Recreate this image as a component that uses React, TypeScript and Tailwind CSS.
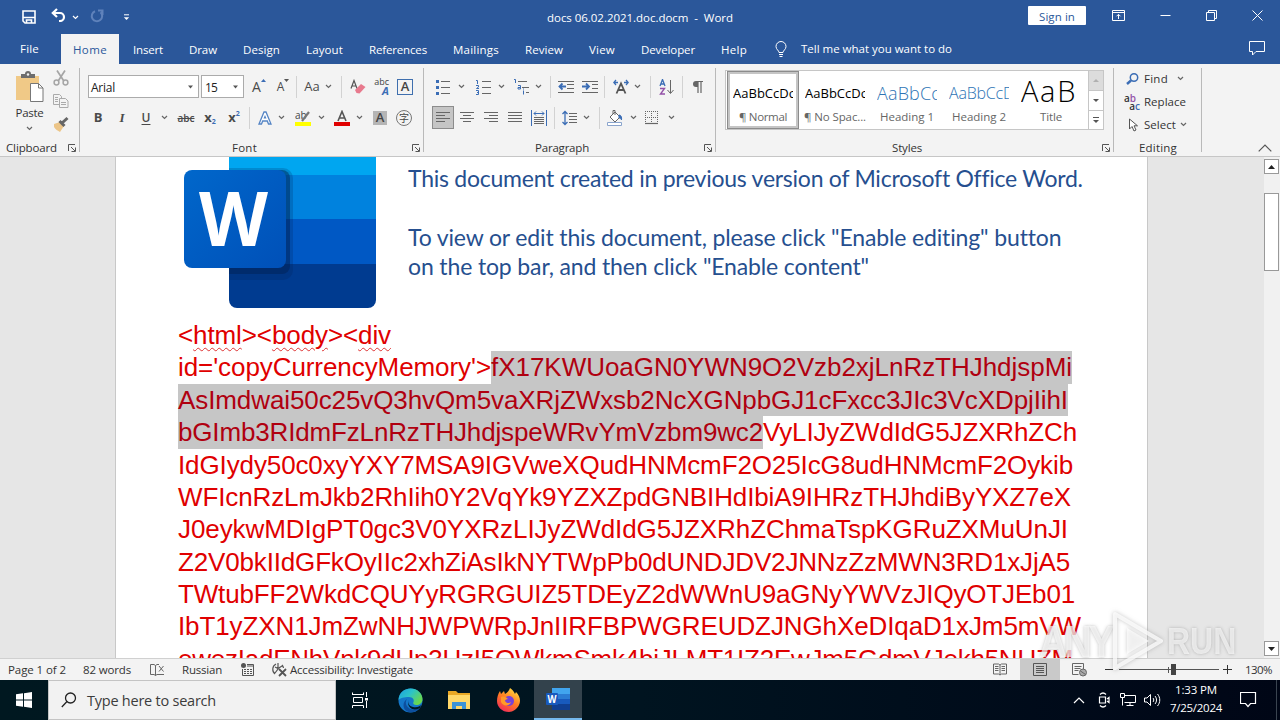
import React, { useLayoutEffect, useRef, useState } from 'react';

type FitProps = { w: number; className?: string; children: React.ReactNode };

// Spaces the letters out so that the text takes exactly `w` pixels.
const Fit: React.FC<FitProps> = ({ w, className = '', children }) => {
  const ref = useRef<HTMLSpanElement>(null);
  const [spacing, setSpacing] = useState(0);

  useLayoutEffect(() => {
    const el = ref.current;
    if (!el) return;
    el.style.letterSpacing = '0px';
    const natural = el.getBoundingClientRect().width;
    const next = (w - natural) / (el.textContent || ' ').length;
    el.style.letterSpacing = `${next}px`;
    setSpacing(next);
  }, [w]);

  return (
    <span
      ref={ref}
      className={`inline-block shrink-0 whitespace-pre ${className}`}
      style={{ letterSpacing: `${spacing}px` }}
    >
      {children}
    </span>
  );
};

type IconProps = { w?: number; h?: number; className?: string; children: React.ReactNode };

const Icon: React.FC<IconProps> = ({ w = 16, h = 16, className = '', children }) => (
  <svg
    width={w}
    height={h}
    viewBox={`0 0 ${w} ${h}`}
    fill="none"
    stroke="currentColor"
    className={`shrink-0 ${className}`}
  >
    {children}
  </svg>
);

const Chevron = ({ className = '' }: { className?: string }) => (
  <Icon w={7} h={5} className={className}>
    <path d="M1 1l2.5 2.5L6 1" strokeWidth="1.2" />
  </Icon>
);

const Sep = ({ className = '' }: { className?: string }) => (
  <div className={`w-px h-[22px] shrink-0 bg-[#d2d2d2] ${className}`} />
);

const Divider = () => <div className="w-px h-[84px] mt-1 shrink-0 bg-[#b9b9b9]" />;

const Launcher = ({ className = '' }: { className?: string }) => (
  <Icon w={8} h={8} className={`text-[#555] ${className}`}>
    <path d="M.5 7V.5H7M3 3l4 4M7.5 3.5v4h-4" />
  </Icon>
);

const Glyph = ({ className = '', children }: { className?: string; children: React.ReactNode }) => (
  <div
    className={`w-4 h-5 shrink-0 flex items-center justify-center leading-none text-[#4a4a4a] ${className}`}
  >
    {children}
  </div>
);

const tabs = [
  { name: 'Insert', w: 30 },
  { name: 'Draw', w: 28 },
  { name: 'Design', w: 37 },
  { name: 'Layout', w: 37 },
  { name: 'References', w: 58 },
  { name: 'Mailings', w: 46 },
  { name: 'Review', w: 38 },
  { name: 'View', w: 26 },
  { name: 'Developer', w: 54 },
  { name: 'Help', w: 26 },
];

const TitleBar = () => (
  <div className="h-[34px] flex items-center text-white">
    <Icon w={14} h={14} className="ml-[22px]">
      <path d="M1 1h12v12H3l-2-2z" strokeWidth="1.6" />
      <path d="M1 7.5h12M4.5 13v-3h5v3" strokeWidth="1.6" />
    </Icon>
    <Icon w={15} h={14} className="ml-[15px] -mt-1">
      <path d="M1.5 5h7.5a4 4 0 010 8H8M6 1L1.8 5 6 9" strokeWidth="2.200" />
    </Icon>
    <Chevron className="ml-[6px]" />
    <Icon w={14} h={14} className="ml-[11px] -mt-0.5 text-[#5f82bb]">
      <path d="M5 2.2A5.2 5.2 0 1010.500 3.200M8 1.500h4.500v4.500" strokeWidth="2" />
    </Icon>
    <Icon w={7} h={7} className="ml-[19px]">
      <path d="M1 .8h5" />
      <path d="M.8 3.2h5.4L3.5 6z" fill="currentColor" stroke="none" />
    </Icon>
    <Fit w={186} className="ml-[417px] mt-0.5 text-[11.5px]">
      docs 06.02.2021.doc.docm{'  -  '}Word
    </Fit>
    <button
      type="button"
      className="ml-[295px] -mt-[3px] w-[58px] h-[19px] shrink-0 bg-white text-[#2b579a] rounded-[1px] flex items-center justify-center text-[11.5px]"
    >
      <Fit w={36} className="mt-0.5">
        Sign in
      </Fit>
    </button>
    <Icon w={13} h={11} className="ml-[26px] -mt-1">
      <path d="M.5.5h12v10H.5zM.5 2.5h12M6.5 9V4.5M4.5 6.3l2-2 2 2" />
    </Icon>
    <Icon w={11} h={11} className="ml-[35px] -mt-1">
      <path d="M.5 5.5h10" />
    </Icon>
    <Icon w={11} h={11} className="ml-[35px] -mt-1">
      <path d="M.5 2.5h8v8h-8zM2.5 2.5v-2h8v8h-2" />
    </Icon>
    <Icon w={11} h={11} className="ml-[35px] -mt-1">
      <path d="M.5.5l10 10M10.5.5l-10 10" />
    </Icon>
  </div>
);

const TabRow = () => (
  <div className="h-[30px] flex items-center text-white text-[11.5px]">
    <Fit w={19} className="ml-5">
      File
    </Fit>
    <div className="ml-[22px] w-[58px] h-full pt-0.5 shrink-0 bg-[#f3f3f3] text-[#2b579a] flex items-center justify-center">
      <Fit w={34}>Home</Fit>
    </div>
    <div className="ml-[14px] mt-0.5 flex">
      {tabs.map((tab) => (
        <Fit key={tab.name} w={tab.w} className="mr-[26px]">
          {tab.name}
        </Fit>
      ))}
    </div>
    <Icon w={12} h={16} className="ml-[2px]">
      <path d="M4 11.5C4 9.5 1 8.500 1 5.500a5 5 0 0110 0c0 3-3 4-3 6zM4 13.500h4M4.500 15.500h3" />
    </Icon>
    <Fit w={151} className="ml-[14px]">
      Tell me what you want to do
    </Fit>
    <Icon w={17} h={15} className="ml-auto mr-[14px] -mt-0.5">
      <path d="M.5.5h15v10H7l-3.500 3.500v-3.500h-3z" />
    </Icon>
  </div>
);

const GroupLabel = ({ children }: { children: React.ReactNode }) => (
  <div className="h-4 mt-auto flex items-center text-[11.5px] text-[#333]">{children}</div>
);

const ClipboardGroup = () => (
  <div className="w-[79px] shrink-0 flex flex-col pt-[7px]">
    <div className="h-[62px] flex">
      <div className="ml-[15px] w-[29px] flex flex-col items-center">
        <Icon w={29} h={32} className="text-[#777]">
          <path d="M1 5h23v24H1z" fill="#f0c987" stroke="none" />
          <path d="M6 3h4a3 3 0 016 0h4v4H6z" fill="#6d6d6d" stroke="none" />
          <circle cx="13" cy="3.500" r="1.200" fill="#f3f3f3" stroke="none" />
          <path d="M15.500 12.500h8l4.500 4.500v13.500H15.500z" fill="#fff" />
          <path d="M23.500 12.500V17H28" />
        </Icon>
        <Fit w={28} className="mt-[2px] text-[11.5px] leading-4 text-[#333]">
          Paste
        </Fit>
        <Chevron className="mt-[5px] text-[#666]" />
      </div>
      <div className="ml-[9px] -mt-px flex flex-col gap-[7px]">
        <Icon className="text-[#a5a5a5]">
          <path d="M4 .5l6.500 10M12 .5L5.500 10.500" strokeWidth="1.700" />
          <circle cx="3.500" cy="12.500" r="2.400" strokeWidth="1.500" />
          <circle cx="12.500" cy="12.500" r="2.400" strokeWidth="1.500" />
        </Icon>
        <Icon className="text-[#aaa]">
          <path d="M.5 1.500h6l2 2v8h-8z" />
          <path d="M6.500 5.500h6l2.500 2.500v6.500H6.500z" fill="#f3f3f3" />
          <path d="M8 9.500h5M8 11.500h5M2 4.500h3M2 6.500h3M2 8.500h3" />
        </Icon>
        <Icon>
          <path d="M1 8l6-2 4 4-4 6c-2-1-5-3-6-5z" fill="#ecc588" stroke="none" />
          <path d="M6.500 5l5 5M9 7l5.500-5" stroke="#666" strokeWidth="3" />
        </Icon>
      </div>
    </div>
    <GroupLabel>
      <Fit w={51} className="ml-[6px]">
        Clipboard
      </Fit>
      <Launcher className="ml-[11px]" />
    </GroupLabel>
  </div>
);

const FontGroup = () => (
  <div className="w-[343px] shrink-0 flex flex-col pt-[7px] text-[#666]">
    <div className="h-[31px] flex items-center">
      <div className="ml-2 w-[111px] h-[23px] shrink-0 bg-white border border-[#ababab] flex items-center text-xs text-[#222]">
        <Fit w={24} className="ml-[2px] mt-0.5">
          Arial
        </Fit>
        <Icon w={7} h={4} className="ml-auto mr-1 text-[#555]">
          <path d="M1 .5h5L3.500 3.500z" fill="currentColor" stroke="none" />
        </Icon>
      </div>
      <div className="ml-[2px] w-[43px] h-[23px] shrink-0 bg-white border border-[#ababab] flex items-center text-xs text-[#222]">
        <Fit w={12} className="ml-[3px] mt-0.5">
          15
        </Fit>
        <Icon w={7} h={4} className="ml-auto mr-1 text-[#555]">
          <path d="M1 .5h5L3.500 3.500z" fill="currentColor" stroke="none" />
        </Icon>
      </div>
      <Glyph className="ml-[7px] text-sm">
        A
        <Icon w={5} h={3} className="mb-3 text-[#3b6db5]">
          <path d="M0 3h5L2.500 0z" fill="currentColor" stroke="none" />
        </Icon>
      </Glyph>
      <Glyph className="ml-2 text-xs">
        A
        <Icon w={5} h={3} className="mb-3 text-[#555]">
          <path d="M0 0h5L2.500 3z" fill="currentColor" stroke="none" />
        </Icon>
      </Glyph>
      <Sep className="ml-[5px]" />
      <Glyph className="ml-[7px] text-[13px]">Aa</Glyph>
      <Chevron className="ml-[5px]" />
      <Sep className="ml-[9px]" />
      <Icon className="ml-2">
        <path d="M1 9.500L4 1.500l3 8M2 7h4" stroke="#555" strokeWidth="1.200" />
        <path d="M5 11l6-6 4.500 3-6 6.500-3-.5z" fill="#e8798d" stroke="none" />
      </Icon>
      <div className="ml-[7px] w-4 shrink-0 flex flex-col items-end leading-none text-[#444]">
        <span className="text-[9px] leading-[8px]">abc</span>
        <span className="text-[11px] leading-[9px] font-bold italic text-[#3b6db5]">A</span>
      </div>
      <div className="ml-2 w-4 h-4 shrink-0 border border-[#3f6fae] flex items-center justify-center text-[13px] font-semibold leading-none text-[#444]">
        A
      </div>
    </div>
    <div className="h-[31px] flex items-center">
      <Glyph className="ml-[10px] text-[13px] font-bold">B</Glyph>
      <Glyph className="ml-2 text-[13px] font-bold italic font-['Liberation_Serif',serif]">I</Glyph>
      <Glyph className="ml-2 text-xs font-semibold underline underline-offset-2">U</Glyph>
      <Chevron className="ml-[7px]" />
      <Glyph className="ml-[10px] text-[10px] font-semibold line-through">abc</Glyph>
      <Glyph className="ml-2 text-[13px] font-bold">
        x<span className="text-[7px] mt-2 text-[#3b6db5]">2</span>
      </Glyph>
      <Glyph className="ml-2 text-[13px] font-bold">
        x<span className="text-[7px] mb-2 text-[#3b6db5]">2</span>
      </Glyph>
      <Sep className="ml-[7px]" />
      <Icon className="ml-[7px]">
        <path d="M2 14L7 2h2l5 12h-2.500l-1.200-3H5.700l-1.200 3z" fill="#fff" stroke="#5585c5" strokeWidth="1.300" />
        <path d="M6.500 8.500L8 5l1.500 3.500z" fill="#5585c5" stroke="none" />
      </Icon>
      <Chevron className="ml-[5px]" />
      <Icon className="ml-[10px]">
        <path d="M0 12h16v4H0z" fill="#ff0" stroke="none" />
        <text x="0" y="9" fontSize="10" fill="#444" stroke="none">
          ab
        </text>
        <path d="M7 11l7-9" stroke="#777" strokeWidth="2.200" />
      </Icon>
      <Chevron className="ml-[7px]" />
      <Icon className="ml-[9px]">
        <path d="M0 12h16v4H0z" fill="#e00000" stroke="none" />
        <path d="M4 11L8 1.500 12 11M5.500 8h5" stroke="#555" strokeWidth="1.600" />
      </Icon>
      <Chevron className="ml-[6px]" />
      <div className="ml-[10px] w-[14px] h-[14px] shrink-0 bg-[#b5b5b5] flex items-center justify-center text-[13px] font-semibold leading-none text-[#444]">
        A
      </div>
      <div className="ml-[9px] w-4 h-4 shrink-0 rounded-full border border-[#777] flex items-center justify-center text-[10px] leading-none text-[#444] font-['Noto_Sans_CJK_SC',sans-serif]">
        字
      </div>
    </div>
    <GroupLabel>
      <Fit w={25} className="ml-[152px]">
        Font
      </Fit>
      <Launcher className="ml-auto mr-[3px]" />
    </GroupLabel>
  </div>
);

const ParagraphGroup = () => (
  <div className="w-[291px] pl-px shrink-0 flex flex-col pt-[7px] text-[#666]">
    <div className="h-[31px] flex items-center">
      <Icon className="ml-[11px]">
        <path d="M5 2.500h9M5 8.500h9M5 14.500h9" />
        <path d="M0 1h3v3H0zM0 7h3v3H0zM0 13h3v3H0z" fill="#3b6db5" stroke="none" />
      </Icon>
      <Chevron className="ml-[6px]" />
      <Icon className="ml-[11px]">
        <path d="M6 2.500h9M6 8.500h9M6 14.500h9" />
        <path d="M0 1.500h1.500V5M0 6.500h2.500v1.500L.5 9.500H3M0 11.500h2.500v4H0M1 13.500h1.500" stroke="#3b6db5" />
      </Icon>
      <Chevron className="ml-[6px]" />
      <Icon className="ml-[9px]">
        <path d="M4 2.500h9M8 8.500h7M12 13.500h3" />
        <path d="M0 .5h1.500V4M4 6.500h2.500V10H4V8.500h2M9.500 11.500v4M9.500 9.500v1" stroke="#3b6db5" />
      </Icon>
      <Chevron className="ml-[5px]" />
      <Sep className="ml-[8px]" />
      <Icon className="ml-[7px]">
        <path d="M0 2.500h16M9 5.500h7M9 9.500h7M0 13.500h16" />
        <path d="M8 7.500H2M4.500 4.500L1.500 7.500l3 3" stroke="#3b6db5" strokeWidth="1.800" />
      </Icon>
      <Icon className="ml-2">
        <path d="M0 2.500h16M10 5.500h6M10 9.500h6M0 13.500h16" />
        <path d="M0 7.500h6M4 4.500l3 3-3 3" stroke="#3b6db5" strokeWidth="1.800" />
      </Icon>
      <Sep className="ml-[6px]" />
      <Icon className="ml-2">
        <path d="M3.500 14.500L8 4.500l4.500 10M5 11h6" strokeWidth="1.800" stroke="#555" />
        <path d="M5 3.500H1M3 1L.8 3.500 3 6M11 3.500h4M13 1l2.200 2.500L13 6" stroke="#3b6db5" strokeWidth="1.300" />
      </Icon>
      <Chevron className="ml-[5px]" />
      <Sep className="ml-[9px]" />
      <Icon className="ml-2">
        <path d="M1 7l2.500-6.500L6 7M2 5h3" stroke="#3b6db5" strokeWidth="1.300" />
        <path d="M1 9.500h4.500L1.500 15H6" stroke="#9452a8" strokeWidth="1.400" />
        <path d="M11.500 1v13M8.500 11l3 3.500 3-3.500" />
      </Icon>
      <Sep className="ml-[7px]" />
      <Icon className="ml-[6px]">
        <path d="M7 2.500h7M9 2v12M12 2v12" strokeWidth="1.200" />
        <path d="M7 2a3 3 0 000 6h2V2z" fill="currentColor" stroke="none" />
      </Icon>
    </div>
    <div className="h-[31px] flex items-center">
      <div className="ml-[7px] w-[22px] h-[23px] shrink-0 bg-[#c5c5c5] border border-[#8c8c8c] flex items-center justify-center">
        <Icon w={14} h={13}>
          <path d="M0 1.500h14M0 4.500h9M0 7.500h14M0 10.500h9" />
        </Icon>
      </div>
      <Icon w={14} h={13} className="ml-[6px]">
        <path d="M0 1.500h14M3 4.500h8M0 7.500h14M3 10.500h8" />
      </Icon>
      <Icon w={14} h={13} className="ml-[10px]">
        <path d="M0 1.500h14M5 4.500h9M0 7.500h14M5 10.500h9" />
      </Icon>
      <Icon w={14} h={13} className="ml-[10px]">
        <path d="M0 1.500h14M0 4.500h14M0 7.500h14M0 10.500h14" />
      </Icon>
      <Icon className="ml-[9px]">
        <path d="M.5 0v16M15.500 0v16M3 3.500h10M5 1.500l-2 2 2 2M11 1.500l2 2-2 2" stroke="#3b6db5" />
        <path d="M3 7.500h10M3 9.500h10M3 11.500h10M3 13.500h10" />
      </Icon>
      <Sep className="ml-[7px]" />
      <Icon className="ml-[7px]">
        <path d="M3 2v12M.5 4L3 1.500 5.500 4M.5 12L3 14.500 5.500 12" stroke="#3b6db5" strokeWidth="1.300" />
        <path d="M7 3.500h8M7 6.500h8M7 9.500h8M7 12.500h8" />
      </Icon>
      <Chevron className="ml-[5px]" />
      <Sep className="ml-[9px]" />
      <Icon className="ml-[7px]">
        <path d="M3 7l5-5 5 5-5 5zM6 4V.5h2V5" fill="#fff" />
        <path d="M12 5c2 0 3 2 2.500 5-.500-1.500-1-2-2.500-2z" fill="#3b6db5" stroke="#3b6db5" />
        <path d="M.5 12.500h14v3H.5z" fill="#fff" stroke="#8aa4cc" />
      </Icon>
      <Chevron className="ml-[7px]" />
      <Icon w={14} h={14} className="ml-[8px]">
        <path d="M0 .5h13M0 6.500h13M.5 0v12M6.500 0v12M12.500 0v12" strokeDasharray="1 1" />
        <path d="M0 12.500h13" strokeWidth="1.200" />
      </Icon>
      <Chevron className="ml-[9px]" />
    </div>
    <GroupLabel>
      <Fit w={54} className="ml-[110px]">
        Paragraph
      </Fit>
      <Launcher className="ml-auto mr-[3px]" />
    </GroupLabel>
  </div>
);

const styles = [
  { name: '¶ Normal', w: 48, sample: 'AaBbCcDc', look: 'text-[13px] text-black', sw: 62 },
  { name: '¶ No Spac...', w: 62, sample: 'AaBbCcDc', look: 'text-[13px] text-black', sw: 62 },
  { name: 'Heading 1', w: 54, sample: 'AaBbCc', look: 'text-[18px] font-light text-[#2e74b5]', sw: 63 },
  { name: 'Heading 2', w: 54, sample: 'AaBbCcD', look: 'text-[16px] font-light text-[#2e74b5]', sw: 65 },
  { name: 'Title', w: 22, sample: 'AaB', look: '-mt-1.5 text-[29px] font-light text-black', sw: 56 },
];

const StylesGroup = () => (
  <div className="w-[397px] shrink-0 flex flex-col pt-[6px]">
    <div className="ml-[9px] w-[379px] h-[60px] flex bg-white border border-[#c6c6c6]">
      <div className="flex-1 pl-px flex">
        {styles.map((s, i) => (
          <div
            key={s.name}
            className={`w-[72px] h-[58px] shrink-0 flex flex-col items-center ${
              i === 0 ? 'border border-[#8c8c8c] ring-2 ring-inset ring-[#c5c5c5]' : 'border border-transparent'
            }`}
          >
            <div className="w-[60px] h-[36px] overflow-hidden flex items-center pt-[6px]">
              <Fit w={s.sw} className={`leading-none ${s.look}`}>
                {s.sample}
              </Fit>
            </div>
            <Fit w={s.w} className="text-[11.5px] leading-[17px] text-[#666]">
              {s.name}
            </Fit>
          </div>
        ))}
      </div>
      <div className="w-[15px] shrink-0 flex flex-col border-l border-[#c6c6c6] text-[#555]">
        <div className="h-[20px] bg-[#dcdcdc] flex items-center justify-center border-b border-[#c6c6c6]">
          <Icon w={6} h={3} className="text-[#b0b0b0]">
            <path d="M0 3h6L3 0z" fill="currentColor" stroke="none" />
          </Icon>
        </div>
        <div className="h-[20px] flex items-center justify-center border-b border-[#c6c6c6]">
          <Icon w={6} h={3}>
            <path d="M0 0h6L3 3z" fill="currentColor" stroke="none" />
          </Icon>
        </div>
        <div className="flex-1 flex items-center justify-center">
          <Icon w={6} h={6}>
            <path d="M0 .5h6" />
            <path d="M0 3h6L3 6z" fill="currentColor" stroke="none" />
          </Icon>
        </div>
      </div>
    </div>
    <GroupLabel>
      <Fit w={30} className="ml-[176px]">
        Styles
      </Fit>
      <Launcher className="ml-auto mr-[3px]" />
    </GroupLabel>
  </div>
);

const EditingGroup = () => (
  <div className="w-[87px] shrink-0 flex flex-col pt-[3px] text-[11.5px] text-[#333]">
    <div className="h-[23px] flex items-center">
      <Icon w={13} h={12} className="ml-3 text-[#3b6db5]">
        <circle cx="8" cy="4.500" r="3.700" strokeWidth="1.500" />
        <path d="M5 7.500L1 11" strokeWidth="2.400" />
      </Icon>
      <Fit w={24} className="ml-[5px]">
        Find
      </Fit>
      <Chevron className="ml-[9px] text-[#666]" />
    </div>
    <div className="h-[23px] flex items-center">
      <div className="ml-[10px] w-4 shrink-0 flex flex-col text-[10px] font-semibold leading-[8px]">
        <span>
          a<span className="text-[#9452a8]">b</span>
        </span>
        <span className="self-end">
          a<span className="text-[#3b6db5]">c</span>
        </span>
      </div>
      <Fit w={42} className="ml-[4px]">
        Replace
      </Fit>
    </div>
    <div className="h-[23px] flex items-center">
      <Icon w={11} h={14} className="ml-[14px] text-[#555]">
        <path d="M1.500 1v10l2.500-2.500 2 4.500 2-1-2-4.200h3.500z" fill="#fff" />
      </Icon>
      <Fit w={32} className="ml-[5px]">
        Select
      </Fit>
      <Chevron className="ml-[4px] text-[#666]" />
    </div>
    <GroupLabel>
      <Fit w={38} className="ml-[25px]">
        Editing
      </Fit>
    </GroupLabel>
  </div>
);

const Ribbon = () => (
  <div className="h-[93px] bg-[#f3f3f3] border-b border-[#c6c6c6] flex">
    <ClipboardGroup />
    <Divider />
    <FontGroup />
    <Divider />
    <ParagraphGroup />
    <Divider />
    <StylesGroup />
    <Divider />
    <EditingGroup />
    <Divider />
    <Icon w={14} h={8} className="ml-auto mr-[8px] mt-auto mb-[4px] text-[#555]">
      <path d="M.7 7.300L7 1l6.300 6.300" strokeWidth="1.200" />
    </Icon>
  </div>
);

const WordLogo = () => (
  <svg width="198" height="152" viewBox="0 0 198 152" className="shrink-0">
    <defs>
      <linearGradient id="tile" x1="0" y1="0" x2="1" y2="1">
        <stop offset="0" stopColor="#0067cb" />
        <stop offset="1" stopColor="#0050b8" />
      </linearGradient>
      <clipPath id="sheet">
        <rect x="45" y="-20" width="147" height="171" rx="8" />
      </clipPath>
    </defs>
    <g clipPath="url(#sheet)">
      <rect x="45" y="0" width="147" height="18" fill="#00a6f0" />
      <rect x="45" y="18" width="147" height="44" fill="#0082de" />
      <rect x="45" y="62" width="147" height="45" fill="#0058c4" />
      <rect x="45" y="107" width="147" height="45" fill="#003b90" />
      <rect x="0" y="11" width="109" height="112" rx="10" fill="#002050" opacity=".2" />
      <rect x="0" y="13" width="106" height="104" rx="8" fill="#002050" opacity=".45" />
    </g>
    <rect x="0" y="13" width="102" height="98" rx="8" fill="url(#tile)" />
    <text
      x="15"
      y="89"
      fontSize="75"
      fontWeight="700"
      fontFamily="'Open Sans', sans-serif"
      fill="#fff"
      textLength="69"
      lengthAdjust="spacingAndGlyphs"
    >
      W
    </text>
  </svg>
);

const payload = [
  { text: 'IdGIydy50c0xyYXY7MSA9IGVweXQudHNMcmF2O25IcG8udHNMcmF2Oykib', w: 895 },
  { text: 'WFIcnRzLmJkb2RhIih0Y2VqYk9YZXZpdGNBIHdIbiA9IHRzTHJhdiByYXZ7eX', w: 893 },
  { text: 'J0eykwMDIgPT0gc3V0YXRzLIJyZWdIdG5JZXRhZChmaTspKGRuZXMuUnJI', w: 890 },
  { text: 'Z2V0bkIIdGFkOyIIc2xhZiAsIkNYTWpPb0dUNDJDV2JNNzZzMWN3RD1xJjA5', w: 892 },
  { text: 'TWtubFF2WkdCQUYyRGRGUIZ5TDEyZ2dWWnU9aGNyYWVzJIQyOTJEb01', w: 897 },
  { text: 'IbT1yZXN1JmZwNHJWPWRpJnIIRFBPWGREUDZJNGhXeDIqaD1xJm5mVW', w: 903 },
  { text: 'ewezIadENhVnk9dUp3UzI5OWkmSmk4bjJLMT1IZ2EwJm5GdmVJekh5NUZM', w: 895 },
];

const Squiggle = ({ children }: { children: React.ReactNode }) => (
  <span className="underline decoration-wavy decoration-[#d33] decoration-1 underline-offset-[3px]">
    {children}
  </span>
);

const Document = () => (
  <div className="h-[501px] flex bg-[#e6e6e6] overflow-hidden">
    <div className="ml-[115px] w-[1033px] h-full shrink-0 bg-white border-x border-[#c8c8c8] overflow-hidden">
      <div className="ml-[68px] h-[162px] flex">
        <WordLogo />
        <div className="ml-[26px] mt-[7px] flex flex-col items-start text-[23px] leading-[29.300px] text-[#264f8f] font-['Lato',sans-serif]">
          <Fit w={673}>This document created in previous version of Microsoft Office Word.</Fit>
          <Fit w={10}> </Fit>
          <Fit w={653}>To view or edit this document, please click "Enable editing" button</Fit>
          <Fit w={461}>on the top bar, and then click "Enable content"</Fit>
        </div>
      </div>
      <div className="ml-[62px] flex flex-col items-start text-[26px] leading-[32.370px] text-[#e00000] font-['Liberation_Sans',Arial,sans-serif]">
        <Fit w={213}>
          &lt;<Squiggle>html</Squiggle>&gt;&lt;<Squiggle>body</Squiggle>&gt;&lt;
          <Squiggle>div</Squiggle>
        </Fit>
        <div className="flex">
          <Fit w={313}>id='copyCurrencyMemory'&gt;</Fit>
          <Fit w={581} className="bg-[#c6c6c6] text-[#b00010]">
            fX17KWUoaGN0YWN9O2Vzb2xjLnRzTHJhdjspMi
          </Fit>
        </div>
        <Fit w={890} className="bg-[#c6c6c6] text-[#b00010]">
          AsImdwai50c25vQ3hvQm5vaXRjZWxsb2NcXGNpbGJ1cFxcc3JIc3VcXDpjIihI
        </Fit>
        <div className="flex">
          <Fit w={585} className="bg-[#c6c6c6] text-[#b00010]">
            bGImb3RIdmFzLnRzTHJhdjspeWRvYmVzbm9wc2
          </Fit>
          <Fit w={314}>VyLIJyZWdIdG5JZXRhZCh</Fit>
        </div>
        {payload.map((line) => (
          <Fit key={line.text} w={line.w}>
            {line.text}
          </Fit>
        ))}
      </div>
    </div>
    <div className="ml-auto w-4 shrink-0 bg-[#f1f1f1] flex flex-col text-[#222]">
      <div className="mt-[2px] w-[15px] h-[15px] bg-white border border-[#999] flex items-center justify-center">
        <Icon w={7} h={4}>
          <path d="M0 4h7L3.500 0z" fill="currentColor" stroke="none" />
        </Icon>
      </div>
      <div className="mt-[19px] w-[15px] h-[78px] bg-white border border-[#999]" />
      <div className="mt-auto mb-[2px] w-[15px] h-[15px] bg-white border border-[#999] flex items-center justify-center">
        <Icon w={7} h={4}>
          <path d="M0 0h7L3.500 4z" fill="currentColor" stroke="none" />
        </Icon>
      </div>
    </div>
  </div>
);

const StatusBar = () => (
  <div className="h-[22px] bg-[#f3f3f3] border-t border-[#d0d0d0] flex items-center text-[11.5px] text-[#333]">
    <Fit w={58} className="ml-2">
      Page 1 of 2
    </Fit>
    <Fit w={48} className="ml-[17px]">
      82 words
    </Fit>
    <Icon w={15} h={13} className="ml-[19px] text-[#666]">
      <path d="M9 1.500H7L5.500 2.500 4 1.500H.5v10H4l1.500 1 1.500-1h7M5.500 2.500v10M9 3l4.500 5.500M13.500 3L9 8.500" />
    </Icon>
    <Fit w={40} className="ml-[17px]">
      Russian
    </Fit>
    <Icon w={13} h={13} className="ml-[19px] text-[#555]">
      <circle cx="2.500" cy="2.500" r="2.500" fill="currentColor" stroke="none" />
      <path d="M6 1.500h6.500v11h-11V6M6 3h6" />
      <path d="M3 6.500h8M3 8.500h8M3 10.500h8" strokeDasharray="2 1" />
    </Icon>
    <Icon w={17} h={15} className="ml-[17px] text-[#555]">
      <path d="M5 2a6 6 0 00-1 10M11 3a6 6 0 011.500 3M7 1v6l-3 4M4 5l3 1.500L11 4" strokeWidth="1.200" />
      <path d="M8 7l7 7M15 7l-7 7" strokeWidth="1.800" />
    </Icon>
    <Fit w={123} className="ml-[2px]">
      Accessibility: Investigate
    </Fit>
    <Icon w={14} h={13} className="ml-auto text-[#666]">
      <path d="M7 2L5.500 1H.5v10h5L7 12l1.500-1h5V1h-5zM7 2v10M2 3.500h3.500M2 5.500h3.500M2 7.500h3.500M8.500 3.500H12M8.500 5.500H12M8.500 7.500H12" />
    </Icon>
    <div className="ml-[13px] w-10 h-full shrink-0 bg-[#c9c9c9] flex items-center justify-center text-[#555]">
      <Icon w={14} h={13}>
        <path d="M.5.5h13v12H.5zM3 3.500h8M3 5.500h8M3 7.500h8M3 9.500h8" />
      </Icon>
    </div>
    <Icon w={15} h={14} className="ml-3 text-[#666]">
      <path d="M11.500 6V.5H.5v11h6M2.500 3.500h7M2.500 5.500h6M2.500 7.500h4" />
      <circle cx="11" cy="9.500" r="3.500" fill="#aaa" />
      <path d="M8.500 8l5 3.500" />
    </Icon>
    <Icon w={9} h={9} className="ml-[18px] text-[#333]">
      <path d="M0 4.500h8" />
    </Icon>
    <div className="ml-[5px] w-[100px] shrink-0 h-3 flex items-center relative">
      <div className="w-full h-px bg-[#555]" />
      <div className="absolute left-[49px] top-[3px] w-px h-[6px] bg-[#555]" />
      <div className="absolute left-[52px] top-0 w-[5px] h-[11px] bg-[#444]" />
    </div>
    <Icon w={9} h={9} className="ml-[4px] text-[#333]">
      <path d="M0 4.500h9M4.500 0v9" />
    </Icon>
    <Fit w={27} className="ml-[13px] mr-2">
      130%
    </Fit>
  </div>
);

const EdgeIcon = () => (
  <svg width="25" height="25" viewBox="0 0 25 25" className="ml-[29px] shrink-0">
    <defs>
      <linearGradient id="edge" x1="0" y1="0" x2="1" y2=".6">
        <stop offset="0" stopColor="#1c9fe0" />
        <stop offset=".5" stopColor="#2cc3c8" />
        <stop offset="1" stopColor="#6ad84c" />
      </linearGradient>
    </defs>
    <circle cx="12.500" cy="12.500" r="12" fill="#1477c9" />
    <path d="M.5 12C1 4 7 .5 12.500.5c7 0 12 5 12 10.500 0 4-3 6-6 6-3 0-4-1.500-3-3 1-2-.5-5-4.500-5C6 9 2 10 .5 12z" fill="url(#edge)" />
    <path d="M9 11c-3 4 0 10 6 10.500 3 .2 6-1 7.500-2.500-3 5-9 6.500-13 4.500C4 21 4.500 14 9 11z" fill="#0d4f9e" />
    <path d="M11 12c-1.500 3 0 6 4 7 4 .8 7-.5 8-2l-1 3c-3 2-8 2-10-.5-2-2-2.500-5-1-7.500z" fill="#001722" />
  </svg>
);

const Taskbar = () => (
  <div className="h-10 flex items-center bg-gradient-to-r from-[#001820] via-[#001420] to-[#000616] text-white">
    <Icon className="ml-4">
      <path d="M0 2.300L7 1.300v6.200H0zM8 1.200L16 0v7.500H8zM0 8.500h7v6.200l-7-1zM8 8.500h8V16l-8-1.200z" fill="#fff" stroke="none" />
    </Icon>
    <div className="ml-4 w-[288px] h-10 shrink-0 bg-[#f2f2f2] border border-[#c4c4c4] flex items-center text-[#3c3c3c]">
      <Icon w={16} h={16} className="ml-3 text-[#222]">
        <circle cx="9.500" cy="6" r="5" strokeWidth="1.300" />
        <path d="M6 9.500L.8 15" strokeWidth="1.300" />
      </Icon>
      <Fit w={129} className="ml-[10px] mt-px text-[14.5px]">
        Type here to search
      </Fit>
    </div>
    <Icon w={17} h={16} className="ml-4">
      <path d="M.5 3V.5M11.500.5V3M.5 16v-2.500M11.500 16v-2.500M.5 2.500h11M.5 13.500h11M1.500 5.500h9v5h-9zM14.500 0v5M14.500 9v7" />
      <path d="M13 6h3v2.500h-3z" fill="#fff" stroke="none" />
    </Icon>
    <EdgeIcon />
    <svg width="22" height="20" viewBox="0 0 22 20" className="ml-[25px] shrink-0">
      <path d="M0 1h8l2 2h12v16H0z" fill="#e9a825" />
      <path d="M0 5h22v14H0z" fill="#ffd869" />
      <path d="M4 12h14v7h-4v-3H8v3H4z" fill="#3c93d6" />
    </svg>
    <svg width="24" height="24" viewBox="0 0 24 24" className="ml-[27px] shrink-0">
      <defs>
        <linearGradient id="fox" x1=".8" y1="0" x2=".2" y2="1">
          <stop offset="0" stopColor="#ffe040" />
          <stop offset=".5" stopColor="#ff7a22" />
          <stop offset="1" stopColor="#f0265e" />
        </linearGradient>
      </defs>
      <path d="M13 0c3 2 4 4 5 6l1-2c4 4 5 9 3 13-2 4-6 7-10 7C5 24 0 19 0 13c0-4 1-7 3-10l1 3 3-3 1 3c2-1 4-3 5-6z" fill="url(#fox)" />
      <circle cx="12" cy="13" r="5" fill="#7542d8" />
      <path d="M4 9c3-1 5 0 7 2-2 0-3 1-3 2 1 2 4 3 6 1-1 4-8 5-10 0z" fill="#ff9a28" />
    </svg>
    <div className="ml-[13px] w-12 h-10 shrink-0 bg-[#33424c] border-b-2 border-[#76b9ed] flex items-center justify-center">
      <svg width="24" height="22" viewBox="0 0 24 22">
        <path d="M6 0h18v6H6z" fill="#41a5ee" />
        <path d="M6 6h18v5H6z" fill="#2b7cd3" />
        <path d="M6 11h18v5H6z" fill="#185abd" />
        <path d="M6 16h18v6H6z" fill="#103f91" />
        <rect x="0" y="5" width="12" height="12" rx="1" fill="#185abd" />
        <text x="1.500" y="14.500" fontSize="10" fontWeight="700" fill="#fff" textLength="9" lengthAdjust="spacingAndGlyphs">
          W
        </text>
      </svg>
    </div>
    <Icon w={12} h={7} className="ml-auto">
      <path d="M1 6l5-5 5 5" strokeWidth="1.200" />
    </Icon>
    <Icon w={12} h={16} className="ml-[13px]">
      <path d="M1.500 5h6v6h-6zM9 7l2-1.500v5L9 9M2 2.500C4 .5 6 .5 8 2.500M2 13.500c2 2 4 2 6 0" strokeWidth="1.200" />
    </Icon>
    <Icon w={16} h={14} className="ml-[10px]">
      <path d="M5 2.500h10.500v7H4.500M10 9.500v3M6.500 12.500h7M.5.5h4v4h-4zM2.500 4.500v8" />
    </Icon>
    <Icon w={17} h={14} className="ml-2">
      <path d="M.5 5v4h2.500l3.500 3.500v-11L3 5zM9 5c1 1 1 3 0 4M11 3c2 2.500 2 5.500 0 8M13.500 1c3 3.500 3 8.500 0 12" />
    </Icon>
    <div className="ml-[9px] -mt-0.5 w-[52px] shrink-0 flex flex-col items-center text-[11.5px] leading-[18px]">
      <Fit w={42}>1:33 PM</Fit>
      <Fit w={52}>7/25/2024</Fit>
    </div>
    <Icon w={17} h={16} className="ml-[18px]">
      <path d="M.5.5h15v11h-5l-2.500 3-2.500-3h-5z" strokeWidth="1.200" />
    </Icon>
    <div className="ml-[19px] mr-[3px] w-px h-10 shrink-0 bg-[#3a4450]" />
  </div>
);

const Watermark = () => (
  <div className="absolute left-[1039px] top-[608px] h-[66px] flex items-center pointer-events-none text-white/65 text-[39px] font-semibold leading-none font-['Liberation_Sans',Arial,sans-serif] [text-shadow:0_0_3px_rgba(110,110,110,.45)]">
    <Fit w={72} className="scale-y-115">
      ANY
    </Fit>
    <svg width="56" height="64" viewBox="0 0 56 64" className="shrink-0 drop-shadow-[0_0_2px_rgba(110,110,110,.5)]">
      <path
        d="M4 5l46 27L4 59z"
        fill="none"
        stroke="#fff"
        strokeOpacity=".75"
        strokeWidth="4"
        strokeLinejoin="round"
      />
      <path d="M16 19l22 13-22 13z" fill="#fff" fillOpacity=".7" />
    </svg>
    <Fit w={64} className="w-[64px] scale-y-115 text-[32px]">
      RUN
    </Fit>
  </div>
);

const App: React.FC = () => (
  <div className="relative w-[1280px] h-[720px] overflow-hidden select-none font-['Open_Sans','Noto_Sans',sans-serif]">
    <div className="bg-[#2b579a]">
      <TitleBar />
      <TabRow />
    </div>
    <Ribbon />
    <Document />
    <StatusBar />
    <Taskbar />
    <Watermark />
  </div>
);

export default App;
